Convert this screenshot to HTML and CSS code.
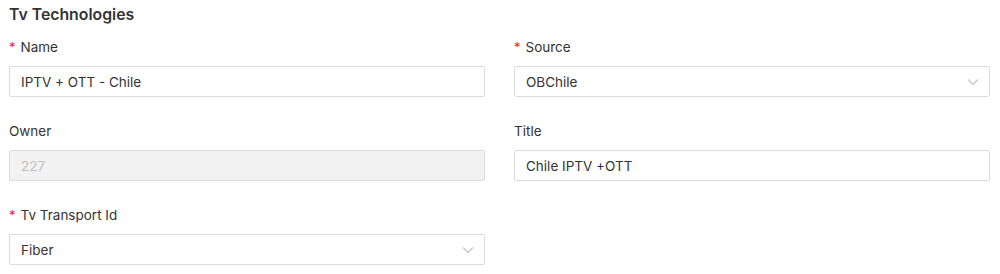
FILE: index.html
```html
<!DOCTYPE html>
<html lang="en">
<head>
    <meta charset="UTF-8">
    <title>Tv Technologies</title>
    <link rel="stylesheet" href="styles.css">
</head>
<body>
    <div class="panel">
        <h3 class="panel-title">Tv Technologies</h3>
        <div class="form-grid">
            <div class="form-item">
                <label class="required">Name</label>
                <input type="text" class="field" value="IPTV + OTT - Chile">
            </div>
            <div class="form-item">
                <label class="required">Source</label>
                <div class="field select">
                    <span>OBChile</span>
                    <svg class="chevron" width="12" height="8" viewBox="0 0 12 8"><path d="M1 1.5l5 5 5-5" fill="none" stroke="#c4c4c4" stroke-width="1.2"/></svg>
                </div>
            </div>
            <div class="form-item">
                <label>Owner</label>
                <input type="text" class="field" value="227" disabled>
            </div>
            <div class="form-item">
                <label>Title</label>
                <input type="text" class="field" value="Chile IPTV +OTT">
            </div>
            <div class="form-item">
                <label class="required">Tv Transport Id</label>
                <div class="field select">
                    <span>Fiber</span>
                    <svg class="chevron" width="12" height="8" viewBox="0 0 12 8"><path d="M1 1.5l5 5 5-5" fill="none" stroke="#c4c4c4" stroke-width="1.2"/></svg>
                </div>
            </div>
        </div>
    </div>
</body>
</html>
```

FILE: styles.css
```css
body {
    margin: 0;
    background-color: #fff;
    font-family: Inter, "Noto Sans", sans-serif;
    color: #333;
}
.panel {
    padding: 4px 10px 0 9px;
}
.panel-title {
    margin: 0 0 11px 0;
    font-size: 15.8px;
    font-weight: 600;
    line-height: 22px;
    color: #333;
}
.form-grid {
    display: grid;
    grid-template-columns: 476px 476px;
    column-gap: 29px;
    row-gap: 24px;
}
.form-item label {
    display: block;
    font-size: 13.5px;
    line-height: 20px;
    margin-bottom: 9px;
    color: #333;
}
.required::before {
    content: "*";
    color: #f5222d;
    margin-right: 5px;
    font-size: 13px;
}
.field {
    box-sizing: border-box;
    width: 100%;
    height: 31px;
    border: 1px solid #dcdcdc;
    border-radius: 2px;
    padding: 0 11px;
    font-family: Inter, "Noto Sans", sans-serif;
    font-size: 13.5px;
    color: #333;
    background-color: #fff;
    outline: none;
    display: block;
}
.field:disabled {
    background-color: #f2f2f2;
    color: #bfbfbf;
}
.select {
    display: flex;
    align-items: center;
    justify-content: space-between;
    padding-right: 10px;
}
```
